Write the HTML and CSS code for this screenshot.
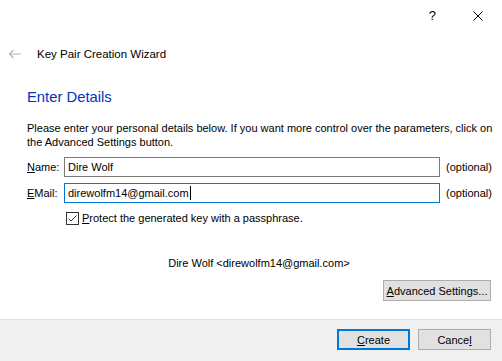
FILE: index.html
```html
<!DOCTYPE html>
<html lang="en">
<head>
  <meta charset="UTF-8" />
  <title>Key Pair Creation Wizard</title>
  <link rel="stylesheet" href="styles.css">
</head>
<body>
  <div class="dialog">
    <!-- Caption buttons -->
    <div class="caption">
      <span class="caption__help">?</span>
      <svg class="caption__close" width="10" height="10" viewBox="0 0 10 10">
        <path d="M0.5 0.5 L9.5 9.5 M9.5 0.5 L0.5 9.5" stroke="#000" stroke-width="1" fill="none" />
      </svg>
    </div>

    <!-- Wizard title -->
    <div class="wizard-title">
      <svg class="back-arrow" width="14" height="10" viewBox="0 0 14 10">
        <path d="M13 5 H1.5 M5.5 1 L1.5 5 L5.5 9" stroke="#b4b4b4" stroke-width="1.2" fill="none" />
      </svg>
      <span>Key Pair Creation Wizard</span>
    </div>

    <!-- Page content -->
    <div class="page">
      <h1 class="page__heading">Enter Details</h1>
      <p class="page__intro">Please enter your personal details below. If you want more control over the parameters, click on the Advanced Settings button.</p>

      <div class="form">
        <label class="form__label"><u>N</u>ame:</label>
        <div class="field">Dire Wolf</div>
        <span class="form__hint">(optional)</span>

        <label class="form__label"><u>E</u>Mail:</label>
        <div class="field field--focus">direwolfm14@gmail.com<span class="caret"></span></div>
        <span class="form__hint">(optional)</span>
      </div>

      <div class="check">
        <span class="check__box">
          <svg width="11" height="11" viewBox="0 0 11 11">
            <path d="M1.5 5.5 L4 8 L9.5 2.5" stroke="#333" stroke-width="1" fill="none" />
          </svg>
        </span>
        <span><u>P</u>rotect the generated key with a passphrase.</span>
      </div>

      <div class="summary">Dire Wolf &lt;direwolfm14@gmail.com&gt;</div>

      <div class="advanced">
        <button class="btn btn--wide"><u>A</u>dvanced Settings...</button>
      </div>
    </div>

    <!-- Footer buttons -->
    <div class="footer">
      <button class="btn btn--default"><u>C</u>reate</button>
      <button class="btn">Cance<u>l</u></button>
    </div>
  </div>
</body>
</html>
```

FILE: styles.css
```css
:root {
  --text-color: #000;
  --heading-color: #0033bc;
  --field-border: #7a7a7a;
  --focus-border: #0078d7;
  --btn-bg: #e1e1e1;
  --btn-border: #adadad;
  --footer-bg: #f0f0f0;
  --footer-line: #dfdfdf;
}

body {
  margin: 0;
  padding: 0;
  background: #fff;
  font-family: 'Liberation Sans', Arial, sans-serif;
  font-size: 11px;
  line-height: 14px;
  color: var(--text-color);
}

.dialog {
  width: 502px;
  height: 361px;
  display: flex;
  flex-direction: column;
  overflow: hidden;
}

.caption {
  height: 32px;
  display: flex;
  align-items: center;
  justify-content: flex-end;
  padding-right: 19px;
  gap: 37px;
}

.caption__help {
  font-size: 13px;
}

.wizard-title {
  height: 44px;
  display: flex;
  align-items: center;
  padding-left: 8px;
  gap: 15px;
  font-size: 11.5px;
}

.page {
  flex: 1;
  padding: 0 11px 0 27px;
}

.page__heading {
  margin: 10px 0 0;
  font-size: 14.8px;
  font-weight: normal;
  line-height: 22px;
  color: var(--heading-color);
}

.page__intro {
  margin: 13px -6px 0 0;
}

.form {
  display: grid;
  grid-template-columns: 37px 376px auto;
  row-gap: 6px;
  align-items: center;
  margin-top: 8px;
}

.form__hint {
  margin-left: 6px;
}

.field {
  height: 20px;
  box-sizing: border-box;
  border: 1px solid var(--field-border);
  padding: 0 3px;
  display: flex;
  align-items: center;
}

.field--focus {
  border-color: var(--focus-border);
}

.caret {
  display: inline-block;
  width: 1px;
  height: 14px;
  background: #000;
  margin-left: 1px;
}

.check {
  display: flex;
  align-items: center;
  gap: 3px;
  margin: 8px 0 0 39px;
}

.check__box {
  width: 13px;
  height: 13px;
  flex: none;
  box-sizing: border-box;
  border: 1px solid #333;
  display: flex;
  align-items: center;
  justify-content: center;
}

.summary {
  text-align: center;
  margin-top: 31px;
}

.advanced {
  display: flex;
  justify-content: flex-end;
  margin-top: 10px;
}

.btn {
  font-family: inherit;
  font-size: 11px;
  color: var(--text-color);
  background: var(--btn-bg);
  border: 1px solid var(--btn-border);
  width: 73px;
  height: 21px;
  padding: 0;
  box-sizing: border-box;
  white-space: nowrap;
}

.btn--wide {
  width: 108px;
}

.btn--default {
  border: 2px solid var(--focus-border);
}

.footer {
  height: 42px;
  flex: none;
  box-sizing: border-box;
  background: var(--footer-bg);
  border-top: 1px solid var(--footer-line);
  display: flex;
  justify-content: flex-end;
  align-items: flex-start;
  gap: 8px;
  padding: 9px 11px 0 0;
}
```
